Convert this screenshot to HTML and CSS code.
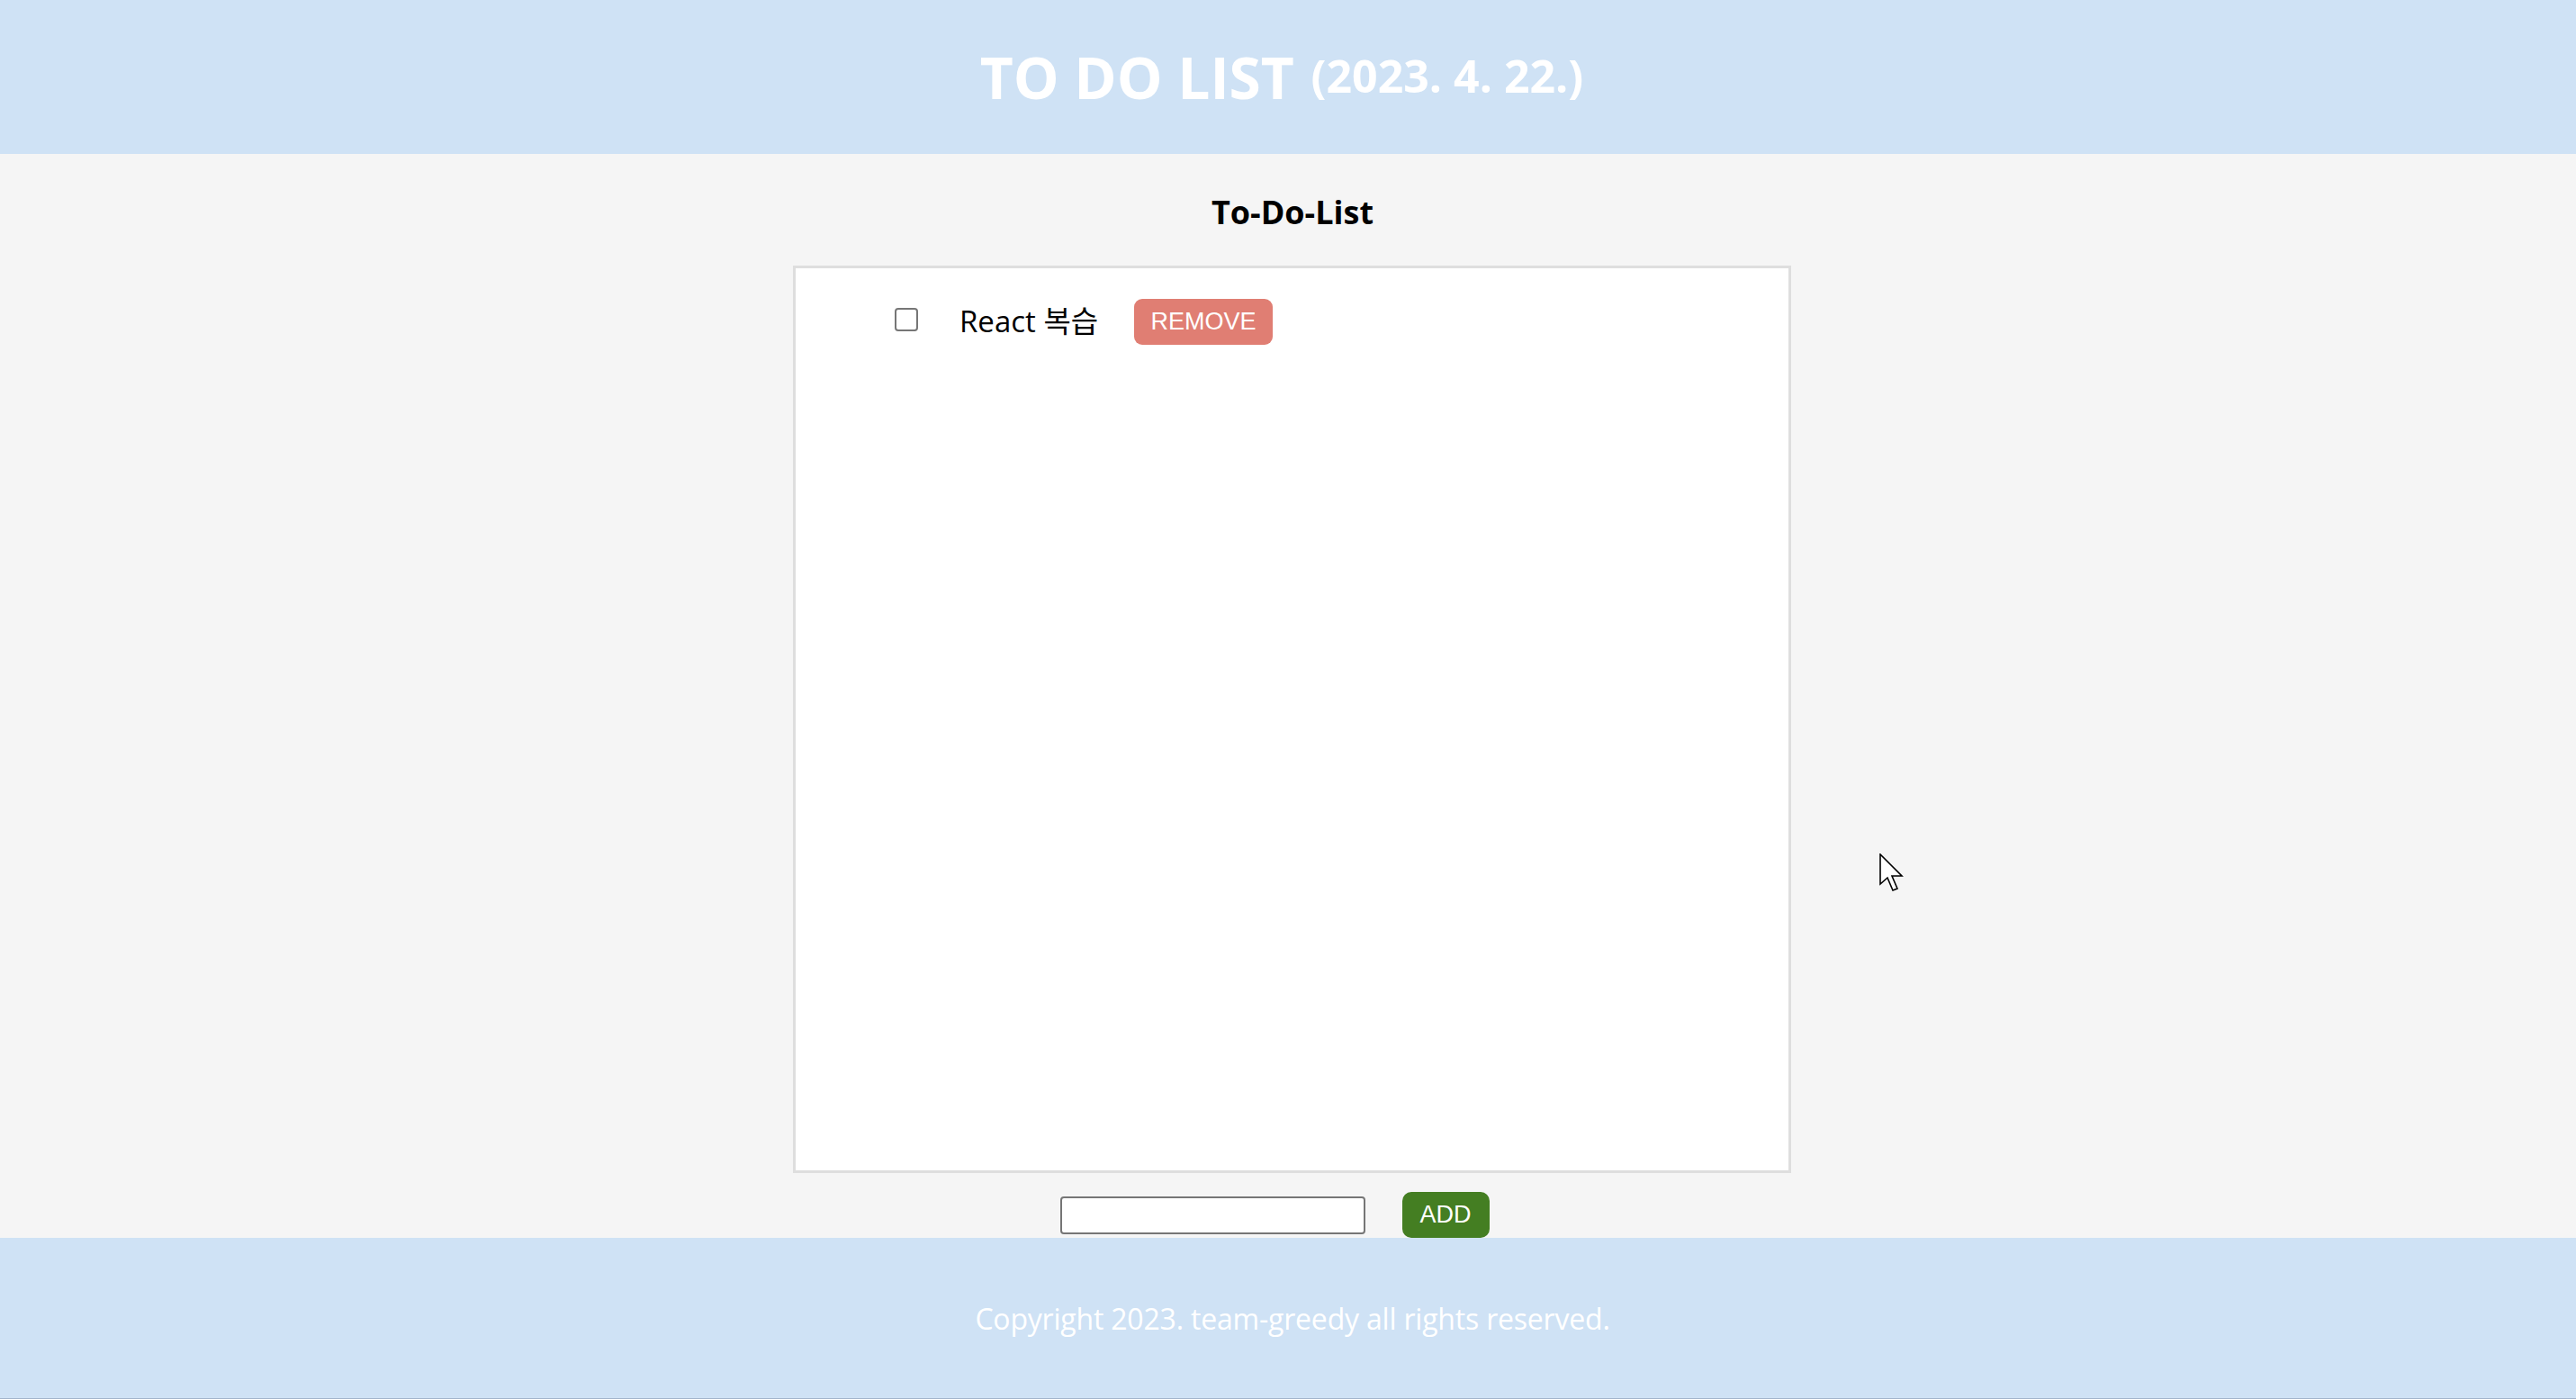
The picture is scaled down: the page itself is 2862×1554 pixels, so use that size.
FILE: index.html
```html
<!DOCTYPE html>
<html lang="ko">
<head>
<meta charset="utf-8">
<title>TO DO LIST</title>
<link rel="stylesheet" href="styles.css">
</head>
<body>
  <header class="site-header">
    <h1 class="site-title">TO DO LIST <span class="site-date">(2023. 4. 22.)</span></h1>
  </header>
  <main class="main">
    <h2 class="list-title">To-Do-List</h2>
    <section class="todo-box">
      <ul class="todo-list">
        <li class="todo-item">
          <input type="checkbox" class="todo-check">
          <span class="todo-text">React 복습</span>
          <button class="btn btn-remove">REMOVE</button>
        </li>
      </ul>
    </section>
    <div class="add-row">
      <input type="text" class="add-input">
      <button class="btn btn-add">ADD</button>
    </div>
  </main>
  <footer class="site-footer">
    <p class="copyright">Copyright 2023. team-greedy all rights reserved.</p>
  </footer>
  <svg class="cursor" width="30" height="50" viewBox="0 0 30 50">
    <path d="M1 1 L1 34 L9 27 L15 41 L20 39 L14 25 L25 25 Z" fill="#fff" stroke="#000" stroke-width="1.6" stroke-linejoin="miter"/>
  </svg>
</body>
</html>
```

FILE: styles.css
```css
* { box-sizing: border-box; }

html, body {
  margin: 0;
  padding: 0;
}

body {
  position: relative;
  height: 1554px;
  display: flex;
  flex-direction: column;
  background: #f5f5f5;
  font-family: "Open Sans", "Noto Sans CJK KR", sans-serif;
  overflow: hidden;
}

.site-header {
  height: 171px;
  flex: 0 0 171px;
  background: #cfe2f5;
  display: flex;
  align-items: center;
  justify-content: center;
  padding-right: 14px;
}

.site-title {
  margin: 0;
  color: #ffffff;
  font-size: 64px;
  font-weight: 700;
  line-height: 1;
  white-space: nowrap;
}

.site-date {
  font-size: 50px;
  font-weight: 700;
  vertical-align: 7px;
  margin-left: 2px;
}

.main {
  flex: 0 0 1204px;
  display: flex;
  flex-direction: column;
  align-items: center;
}

.list-title {
  margin: 40px 0 0 10px;
  height: 48px;
  font-size: 36px;
  line-height: 50px;
  font-weight: 700;
  color: #000;
}

.todo-box {
  margin: 36px 0 0 9px;
  width: 1109px;
  height: 1008px;
  background: #ffffff;
  border: 3px solid #dedede;
}

.todo-list {
  list-style: none;
  margin: 0;
  padding: 34px 0 0 110px;
}

.todo-item {
  display: flex;
  align-items: center;
  height: 51px;
}

.todo-check {
  appearance: none;
  -webkit-appearance: none;
  margin: 0 46px 5px 0;
  width: 26px;
  height: 26px;
  border: 2px solid #767676;
  border-radius: 4px;
  background: #fff;
}

.todo-text {
  font-size: 33px;
  color: #000;
  margin-right: 40px;
  margin-bottom: 5px;
}

.btn {
  border: none;
  color: #fff;
  font-family: "Liberation Sans", Arial, sans-serif;
  font-size: 27px;
  line-height: 51px;
  height: 51px;
  padding: 0 20px;
  border-radius: 9px;
  cursor: pointer;
}

.btn-remove {
  width: 154px;
  padding: 0;
  background: #e07e73;
}

.btn-add {
  width: 97px;
  padding: 0;
  background: #447e22;
  border-radius: 10px;
}

.add-row {
  margin-top: 21px;
  height: 51px;
  display: flex;
  align-items: center;
  gap: 41px;
  padding-right: 30px;
}

.add-input {
  width: 339px;
  height: 42px;
  border: 2px solid #767676;
  border-radius: 4px;
  background: #fff;
  margin: 0;
}

.site-footer {
  flex: 1 1 auto;
  background: #cfe2f5;
  border-bottom: 1px solid #a2b4cb;
  display: flex;
  align-items: center;
  justify-content: center;
}

.copyright {
  margin: 0 0 0 10px;
  color: #ffffff;
  font-size: 32px;
  font-weight: 400;
  letter-spacing: -0.2px;
}

.cursor {
  position: absolute;
  left: 2088px;
  top: 948px;
}
```
